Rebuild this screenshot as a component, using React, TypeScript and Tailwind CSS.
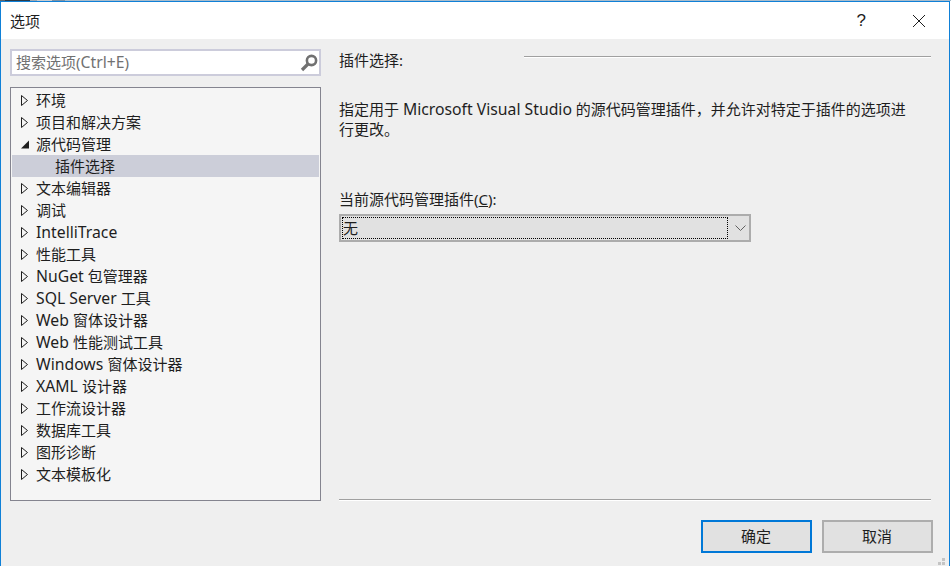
import React from "react";

const items = [
  { name: "环境" },
  { name: "项目和解决方案" },
  { name: "源代码管理", open: true },
  { name: "插件选择", child: true },
  { name: "文本编辑器" },
  { name: "调试" },
  { name: "IntelliTrace" },
  { name: "性能工具" },
  { name: "NuGet 包管理器" },
  { name: "SQL Server 工具" },
  { name: "Web 窗体设计器" },
  { name: "Web 性能测试工具" },
  { name: "Windows 窗体设计器" },
  { name: "XAML 设计器" },
  { name: "工作流设计器" },
  { name: "数据库工具" },
  { name: "图形诊断" },
  { name: "文本模板化" },
];

// latin runs sit a bit wider than the cjk ones in the screenshot
const Txt = ({ text }: { text: string }) => (
  <>
    {text.split(/([A-Za-z][A-Za-z +]*[A-Za-z]|\s)/).map((part, i) =>
      /[A-Za-z\s]/.test(part) ? (
        <span key={i} className="text-[15.75px]">
          {part}
        </span>
      ) : (
        part
      )
    )}
  </>
);

const Arrow = ({ open }: { open?: boolean }) =>
  open ? (
    <svg width="8" height="9" viewBox="0 0 8 9" className="mr-[7px] shrink-0">
      <path d="M8 0.5V8.5H0Z" fill="#1e1e1e" />
    </svg>
  ) : (
    <svg width="8" height="11" viewBox="0 0 8 11" className="mr-[7px] shrink-0">
      <path d="M0.5 0.5V10.5L6.5 5.5Z" fill="none" stroke="#1e1e1e" />
    </svg>
  );

const Rule = ({ className }: { className: string }) => (
  <div className={"h-[2px] border-t border-t-[#a0a0a0] border-b border-b-white " + className} />
);

export default function App() {
  return (
    <div className="relative flex h-[566px] w-[951px] flex-col overflow-hidden bg-white font-['Noto_Sans','Noto_Sans_CJK_SC',sans-serif] text-[15px] text-[#1e1e1e]">
      <div className="flex h-px shrink-0 bg-[#a9bccb]">
        <div className="w-[5px] bg-[#5a6670]" />
        <div className="w-[25px] bg-[#2c3a48]" />
        <div className="w-[7px] bg-[#a0a8b0]" />
        <div className="w-[15px] bg-[#c8ccd0]" />
        <div className="w-[13px] bg-[#7d92a5]" />
      </div>
      <div className="flex w-[950px] flex-1 flex-col border-x border-t border-[#0f80d7] bg-[#efefef]">
        <div className="flex h-[37px] shrink-0 items-center bg-white pl-[9px] pr-[23px]">
          <span className="leading-5">选项</span>
          <span className="ml-auto mr-[46px] font-['Liberation_Sans',sans-serif] text-[17px]">?</span>
          <svg width="14" height="14" viewBox="0 0 14 14">
            <path d="M1 1L13 13M13 1L1 13" stroke="#1e1e1e" strokeWidth="1" fill="none" />
          </svg>
        </div>

        <div className="flex flex-1 pl-[9px] pt-[10px]">
          <div className="w-[311px] shrink-0">
            <div className="flex h-[27px] items-center justify-between border-2 border-[#ccccdb] bg-white pl-[4px] pr-[1px] text-[#717171]">
              <span>
                <Txt text="搜索选项(Ctrl+E)" />
              </span>
              <svg width="18" height="18" viewBox="0 0 18 18">
                <circle cx="11.5" cy="6.5" r="4.6" fill="none" stroke="#717171" strokeWidth="2.6" />
                <path d="M8 10L2 16" stroke="#717171" strokeWidth="3.2" />
              </svg>
            </div>
            <div className="mt-[11px] h-[414px] border border-[#84848f] bg-[#f5f5f5] pt-[1px] pl-px pr-px">
              {items.map((item) => (
                <div
                  key={item.name}
                  className={
                    item.child
                      ? "flex h-[22px] items-center whitespace-nowrap bg-[#ccced9] pl-[43px]"
                      : "flex h-[22px] items-center whitespace-nowrap pl-[9px]"
                  }
                >
                  {!item.child && <Arrow open={item.open} />}
                  <span className={/[A-Za-z]/.test(item.name) ? "pt-[2px]" : ""}>
                    <Txt text={item.name} />
                  </span>
                </div>
              ))}
            </div>
          </div>

          <div className="ml-[18px] flex w-[594px] flex-col">
            <div className="flex h-[22px] w-[592px] items-center">
              <span>插件选择:</span>
              <Rule className="ml-auto mb-[6px] w-[407px]" />
            </div>
            <p className="mt-[28px] leading-[20px]">
              指定用于 <Txt text="Microsoft Visual Studio" /> 的源代码管理插件，并允许对特定于插件的选项进
              <br />
              行更改。
            </p>
            <label className="mt-[50px] leading-5">
              当前源代码管理插件(<span className="underline">C</span>):
            </label>
            <div className="mt-[5px] flex h-[28px] w-[412px] items-center border-2 border-[#acacac] bg-[#e1e1e1]">
              <div className="ml-px flex h-[22px] w-[386px] items-center border border-dotted border-black">
                无
              </div>
              <svg width="11" height="6" viewBox="0 0 11 6" className="ml-[7px]">
                <path d="M0.5 0.5L5.5 5.5L10.5 0.5" fill="none" stroke="#606060" />
              </svg>
            </div>
            <Rule className="mt-auto w-[592px]" />
            <div className="mt-[19px] mb-[13px] flex justify-end gap-[10px]">
              <button className="h-[33px] w-[111px] border-2 border-[#0078d7] bg-[#e1e1e1] pr-px">确定</button>
              <button className="h-[33px] w-[111px] border-2 border-[#adadad] bg-[#e1e1e1] pr-px">取消</button>
            </div>
          </div>
        </div>
      </div>
      {/* resize grip */}
      <svg width="8" height="8" viewBox="0 0 8 8" className="absolute right-[5px] bottom-0">
        <path d="M4 0H7V3H4ZM0 4H3V7H0ZM4 4H7V7H4Z" fill="#c4c4c4" />
      </svg>
    </div>
  );
}
